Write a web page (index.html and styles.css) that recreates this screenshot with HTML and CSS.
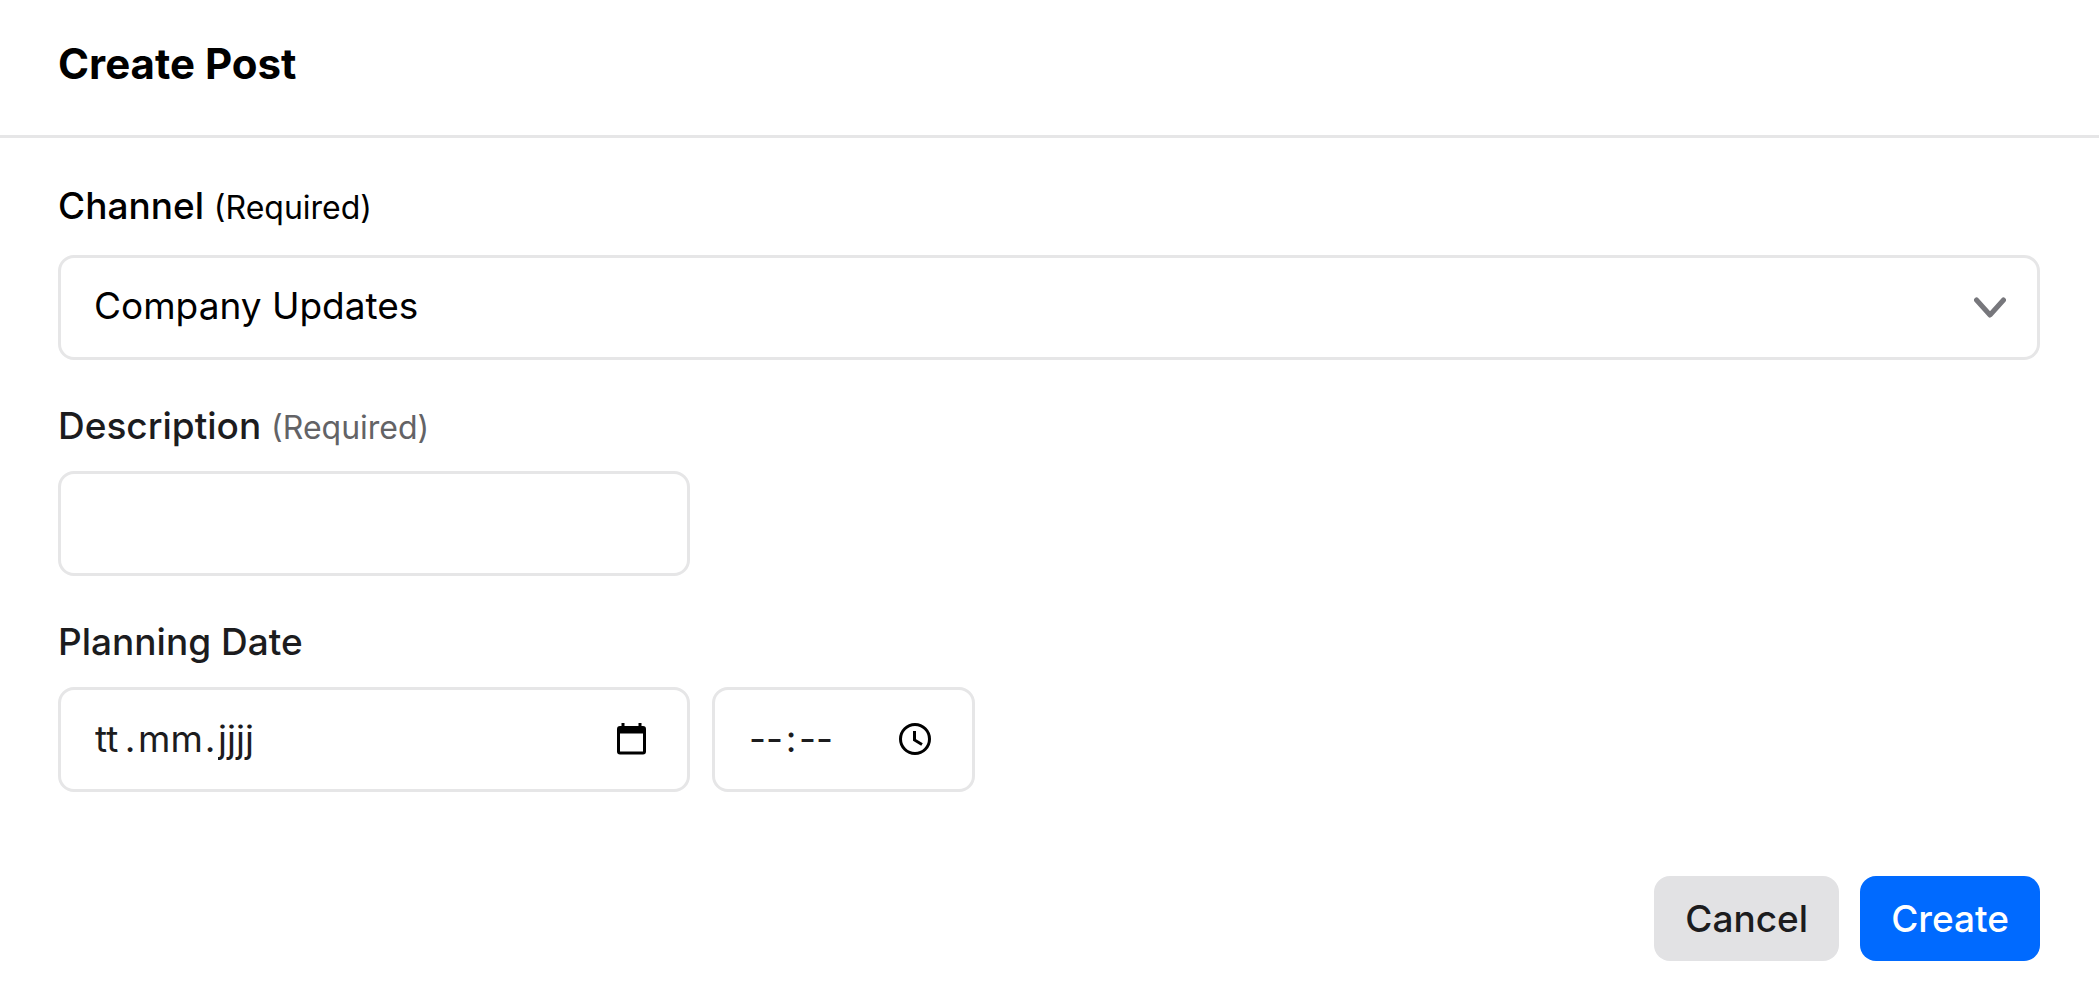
FILE: index.html
```html
<!DOCTYPE html>
<html lang="en">
<head>
<meta charset="utf-8">
<title>Create Post</title>
<link rel="stylesheet" href="styles.css">
</head>
<body>
<form class="dialog">
  <header class="dialog-header">
    <h1 class="dialog-title">Create Post</h1>
  </header>
  <div class="dialog-body">
    <div class="field field-channel">
      <label class="label" for="channel">Channel <span class="required">(Required)</span></label>
      <div class="control">
        <select class="input" id="channel" required>
          <option>Company Updates</option>
        </select>
        <svg class="chevron" viewBox="0 0 32 22" aria-hidden="true"><path d="M2.500 3L16 18L29.500 3"/></svg>
      </div>
    </div>
    <div class="field">
      <label class="label" for="description">Description <span class="required">(Required)</span></label>
      <input class="input input-medium" id="description" type="text" required>
    </div>
    <div class="field">
      <label class="label" for="day">Planning Date</label>
      <div class="row">
        <div class="input input-medium segments" role="group" aria-label="Date">
          <input class="segment segment-day" id="day" type="text" placeholder="tt" aria-label="Day">
          <span class="separator">.</span>
          <input class="segment segment-month" type="text" placeholder="mm" aria-label="Month">
          <span class="separator">.</span>
          <input class="segment segment-year" type="text" placeholder="jjjj" aria-label="Year">
          <button class="picker" type="button" aria-label="Open calendar">
            <svg class="picker-icon" viewBox="0 0 32 32" aria-hidden="true"><path fill-rule="evenodd" d="M6.500 0H9.500V3H23.500V0H26.500V3H28Q31 3 31 6V28.500Q31 31.500 28 31.500H5Q2 31.500 2 28.500V6Q2 3 5 3H6.500ZM5 10.500V28.500H28V10.500Z"/></svg>
          </button>
        </div>
        <div class="input input-small segments" role="group" aria-label="Time">
          <input class="segment segment-clock" type="text" placeholder="--" aria-label="Hours">
          <span class="separator">:</span>
          <input class="segment segment-clock" type="text" placeholder="--" aria-label="Minutes">
          <button class="picker" type="button" aria-label="Choose time">
            <svg class="picker-icon picker-icon-line" viewBox="0 0 32 32" aria-hidden="true"><circle cx="15" cy="16" r="14.500"/><path class="hands" d="M14.500 8V17L22 21.500"/></svg>
          </button>
        </div>
      </div>
    </div>
  </div>
  <footer class="actions">
    <button class="button" type="button">Cancel</button>
    <button class="button button-primary" type="submit">Create</button>
  </footer>
</form>
</body>
</html>
```
FILE: styles.css
```css
* {
  box-sizing: border-box;
}

body {
  margin: 0;
  background: #fff;
  color: #1c1c1e;
  font-family: Inter, "Liberation Sans", sans-serif;
}

.dialog-header {
  padding: 36px 58px 43px;
  border-bottom: 3px solid #e6e6e7;
  color: #000;
}

.dialog-title {
  margin: 0;
  font-size: 42px;
  font-weight: 700;
  line-height: 56px;
}

.dialog-body {
  display: flex;
  flex-direction: column;
  gap: 43px;
  padding: 45px 59px 0 58px;
}

.field {
  display: flex;
  flex-direction: column;
  gap: 22px;
}

.field-channel {
  gap: 26px;
  color: #000;
}

.label {
  font-size: 37px;
  font-weight: 500;
  line-height: 46px;
}

.required {
  color: #636366;
  font-size: 32px;
  font-weight: 400;
  line-height: 32px;
}

.field-channel .required {
  color: #000;
}

.row {
  display: flex;
  gap: 22px;
}

.control {
  position: relative;
}

.input {
  display: block;
  width: 100%;
  height: 105px;
  margin: 0;
  padding: 0 33px 4px;
  border: 3px solid #e6e6e7;
  border-radius: 16px;
  background: #fff;
  color: inherit;
  font-family: inherit;
  font-size: 37px;
  line-height: 46px;
  appearance: none;
}

.input-medium {
  width: 632px;
}

.input-small {
  width: 263px;
}

.segments {
  display: flex;
  align-items: center;
  padding: 0 40px 2px 32px;
}

.segment {
  height: 56px;
  padding: 0 2px;
  border: 0;
  background: none;
  color: inherit;
  font: inherit;
  font-variant-ligatures: none;
}

.segment::placeholder {
  color: inherit;
  opacity: 1;
}

.segment-day {
  width: 31px;
}

.segment-month {
  width: 68px;
}

.segment-year {
  width: 44px;
}

.segment-clock {
  width: 38px;
}

.separator {
  width: 12px;
  text-align: center;
}

.chevron {
  position: absolute;
  top: 42px;
  right: 34px;
  width: 32px;
  height: 22px;
  fill: none;
  stroke: #77777c;
  stroke-width: 5;
  stroke-linecap: round;
  stroke-linejoin: round;
  pointer-events: none;
}

.picker {
  width: 32px;
  height: 32px;
  margin-left: auto;
  padding: 0;
  border: 0;
  background: none;
}

.picker-icon {
  display: block;
  width: 32px;
  height: 32px;
  fill: #000;
  overflow: visible;
}

.picker-icon-line {
  fill: none;
  stroke: #000;
  stroke-width: 3;
}

.hands {
  stroke-width: 3;
}

.actions {
  display: flex;
  justify-content: flex-end;
  gap: 21px;
  padding: 84px 59px 36px;
}

.button {
  height: 85px;
  padding: 0 31px;
  border: 0;
  border-radius: 16px;
  background: #e2e2e4;
  color: #1c1c1e;
  font-family: inherit;
  font-size: 37px;
  font-weight: 500;
  line-height: 46px;
}

.button-primary {
  background: #006aff;
  color: #fff;
}
```
